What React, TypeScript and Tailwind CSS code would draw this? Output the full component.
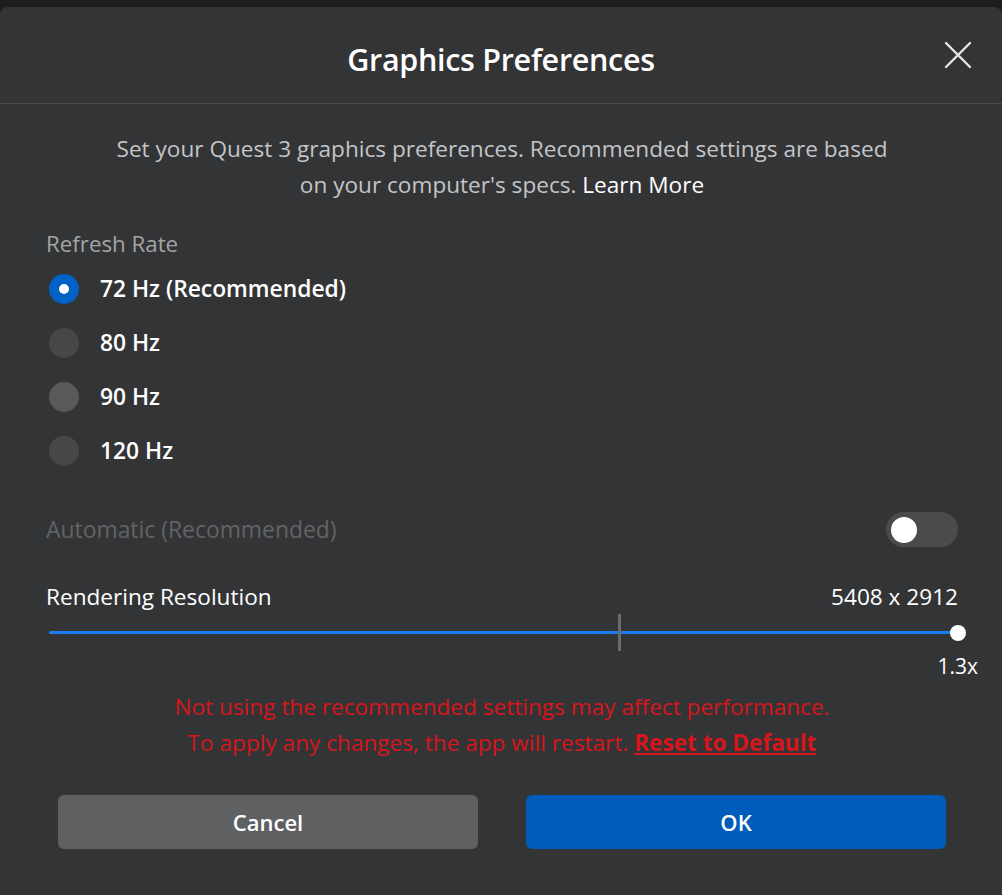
import { useState } from 'react';

const RATES = ['72 Hz (Recommended)', '80 Hz', '90 Hz', '120 Hz'];

function App() {
  const [rate, setRate] = useState(0);
  const [auto, setAuto] = useState(false);

  return (
    <div
      className="min-h-screen bg-[#1c1d1f] pt-[7px] text-white"
      style={{ fontFamily: '"Open Sans", "Noto Sans", sans-serif' }}
    >
      <div className="min-h-[888px] rounded-t-lg bg-[#333436]">
        {/* header */}
        <div className="relative flex h-[97px] items-center justify-center border-b border-[#4a4b4d] pt-[8px]">
          <h1 className="text-[30.5px] font-semibold leading-[40px] tracking-[-0.3px]">Graphics Preferences</h1>
          <button className="absolute right-[29px] top-[33px] text-[#e6e6e6]">
            <svg width="30" height="30" viewBox="0 0 30 30" fill="none" stroke="currentColor" strokeWidth="2.4" strokeLinecap="round">
              <path d="M3 3L27 27M27 3L3 27" />
            </svg>
          </button>
        </div>

        <div className="px-[46px] pr-[44px]">
          <p className="mt-[27px] text-center text-[22.6px] leading-[36px] text-[#c4c5c7]">
            Set your Quest 3 graphics preferences. Recommended settings are based
            <br />
            on your computer's specs. <span className="text-white">Learn More</span>
          </p>

          <div className="mt-[25px] text-[22.3px] leading-[32px] text-[#a3a4a6]">Refresh Rate</div>

          <div className="mt-[2px] flex flex-col">
            {RATES.map((r, i) => (
              <button
                key={r}
                onClick={() => setRate(i)}
                className="flex h-[54px] items-center gap-[21px] pl-[3px] text-left"
              >
                <span
                  className={`flex h-[30px] w-[30px] shrink-0 items-center justify-center rounded-full ${
                    rate === i ? 'bg-[#0062c6]' : i === 2 ? 'bg-[#58595b]' : 'bg-[#464749]'
                  }`}
                >
                  {rate === i && <span className="h-[10px] w-[10px] rounded-full bg-white" />}
                </span>
                <span className="text-[22.8px] font-semibold leading-[32px]">{r}</span>
              </button>
            ))}
          </div>

          <div className="mt-[34px] flex items-center justify-between">
            <span className="text-[22.9px] leading-[32px] text-[#626365]">Automatic (Recommended)</span>
            <button
              onClick={() => setAuto(!auto)}
              className={`flex h-[35px] w-[72px] items-center rounded-full px-[5px] ${
                auto ? 'justify-end bg-[#0062c6]' : 'bg-[#4a4b4d]'
              }`}
            >
              <span className="h-[26px] w-[26px] rounded-full bg-white" />
            </button>
          </div>

          <div className="mt-[34px] flex items-center justify-between text-[22.6px] leading-[32px]">
            <span>Rendering Resolution</span>
            <span>5408 x 2912</span>
          </div>

          {/* slider */}
          <div className="relative ml-[3px] mt-[1px] h-[38px]">
            <div className="absolute left-0 right-0 top-[17px] h-[3px] rounded bg-[#1a7df0]" />
            <div className="absolute left-[569px] top-0 h-[37px] w-[3px] bg-[#6a6b6d]" />
            <div className="absolute right-[-8px] top-[11px] h-[16px] w-[16px] rounded-full bg-white" />
          </div>
          <div className="-mr-[20px] mt-[0px] text-right text-[21px] leading-[28px]">1.3x</div>

          <p className="mt-[9px] text-center text-[22.6px] leading-[36px] text-[#d8141c]">
            Not using the recommended settings may affect performance.
            <br />
            To apply any changes, the app will restart.{' '}
            <a className="font-bold underline underline-offset-2">Reset to Default</a>
          </p>

          <div className="mt-[34px] flex gap-[48px] px-[12px]">
            <button className="h-[54px] flex-1 rounded-md bg-[#5f6062] text-[22px] font-semibold">Cancel</button>
            <button className="h-[54px] flex-1 rounded-md bg-[#005cba] text-[22px] font-semibold">OK</button>
          </div>
        </div>
      </div>
    </div>
  );
}

export default App;
